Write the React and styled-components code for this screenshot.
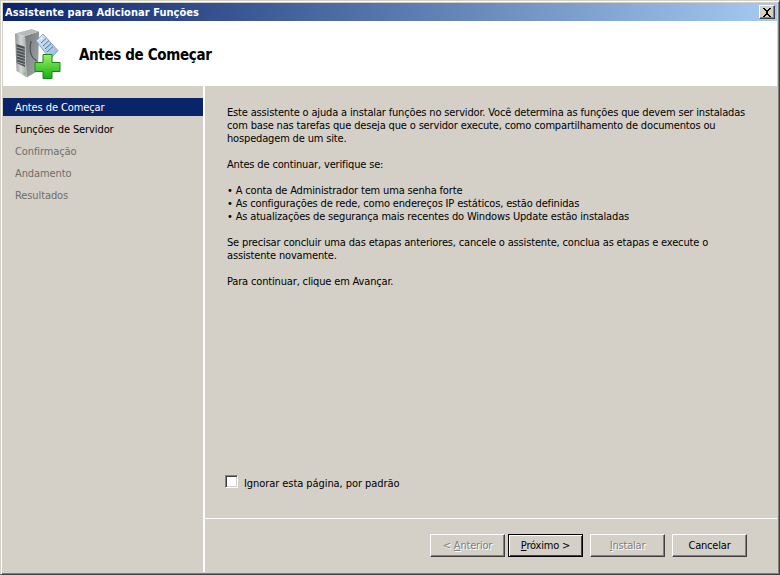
import styled, { createGlobalStyle } from "styled-components";

const GlobalStyle = createGlobalStyle`
  html, body {
    margin: 0;
    padding: 0;
    background: #d4d0c8;
  }
  * {
    box-sizing: border-box;
  }
`;

const steps = [
  { label: "Antes de Começar", state: "active" },
  { label: "Funções de Servidor", state: "normal" },
  { label: "Confirmação", state: "disabled" },
  { label: "Andamento", state: "disabled" },
  { label: "Resultados", state: "disabled" },
];

function ServerIcon() {
  return (
    <svg width="48" height="50" viewBox="0 0 48 50">
      <defs>
        <linearGradient id="front" x1="0" y1="0" x2="1" y2="0">
          <stop offset="0" stopColor="#8f9395" />
          <stop offset="0.5" stopColor="#d4d6d6" />
          <stop offset="1" stopColor="#a9acad" />
        </linearGradient>
        <linearGradient id="side" x1="0" y1="0" x2="1" y2="1">
          <stop offset="0" stopColor="#74797c" />
          <stop offset="1" stopColor="#a4a8aa" />
        </linearGradient>
        <linearGradient id="plus" x1="0" y1="0" x2="0" y2="1">
          <stop offset="0" stopColor="#a0ee68" />
          <stop offset="1" stopColor="#14b014" />
        </linearGradient>
        <linearGradient id="tag" x1="0" y1="0" x2="1" y2="1">
          <stop offset="0" stopColor="#dcebf9" />
          <stop offset="1" stopColor="#94b6da" />
        </linearGradient>
      </defs>
      <path d="M11 7 L25 2.5 L24 42 L12.5 48.5 Z" fill="url(#side)" />
      <path d="M1 4.5 L17.5 0 L25 2.5 L11 7 Z" fill="#b7babb" />
      <path d="M1 4.5 L11 7 L12.5 48.5 L2.5 42 Z" fill="url(#front)" />
      <path d="M2.5 15 L10.7 17.7 L10.9 38 L2.7 34 Z" fill="#4a5053" />
      <path d="M2.5 18 L10.7 20.5 M2.5 21 L10.8 23.5 M2.6 24 L10.8 26.5 M2.6 27 L10.8 29.5 M2.6 30 L10.9 32.5 M2.7 33 L10.9 35.5" stroke="#a8acae" strokeWidth="0.9" />
      <rect x="9.5" y="43.5" width="2" height="2" fill="#63d13c" />
      <path d="M17 12 C15 22 17 29 23 32" fill="none" stroke="#4e5457" strokeWidth="1.3" />
      <path d="M22 11.7 L29 5 L44 21.7 L36 30 Z" fill="url(#tag)" stroke="#6f93b8" strokeWidth="0.8" />
      <circle cx="27.5" cy="9.5" r="1" fill="#fff" />
      <path d="M27 14 L32 9.5 M29 17 L35 11.5 M31 20 L37 14.5 M33 23 L39 17.5" stroke="#55779c" strokeWidth="1" />
      <path
        d="M29 25.5 h9 v8 h8 v9 h-8 v7 h-9 v-7 h-8 v-9 h8 Z"
        fill="url(#plus)"
        stroke="#128a12"
        strokeWidth="1"
        strokeLinejoin="round"
      />
    </svg>
  );
}

export default function App() {
  return (
    <>
      <GlobalStyle />
      <Window>
        <TitleBar>
          <Title>Assistente para Adicionar Funções</Title>
          <CloseButton aria-label="Fechar">
            <svg width="10" height="9" viewBox="0 0 10 9">
              <path d="M1 0h2v1h1v1h2V1h1V0h2v1H8v1H7v1H6v3h1v1h1v1h1v1H7V8H6V7H4v1H3v1H1V8h1V7h1V6h1V3H3V2H2V1H1z" fill="#000" />
            </svg>
          </CloseButton>
        </TitleBar>
        <Banner>
          <IconSlot>
            <ServerIcon />
          </IconSlot>
          <Heading>Antes de Começar</Heading>
        </Banner>
        <Body>
          <Sidebar>
            {steps.map((step) => (
              <Step key={step.label} $state={step.state}>
                {step.label}
              </Step>
            ))}
          </Sidebar>
          <Main>
            <Content>
              <Paragraph>
                Este assistente o ajuda a instalar funções no servidor. Você determina as funções que devem ser instaladas
                <br />
                com base nas tarefas que deseja que o servidor execute, como compartilhamento de documentos ou
                <br />
                hospedagem de um site.
              </Paragraph>
              <Paragraph>Antes de continuar, verifique se:</Paragraph>
              <Paragraph>
                • A conta de Administrador tem uma senha forte
                <br />
                • As configurações de rede, como endereços IP estáticos, estão definidas
                <br />
                • As atualizações de segurança mais recentes do Windows Update estão instaladas
              </Paragraph>
              <Paragraph>
                Se precisar concluir uma das etapas anteriores, cancele o assistente, conclua as etapas e execute o
                <br />
                assistente novamente.
              </Paragraph>
              <Paragraph>Para continuar, clique em Avançar.</Paragraph>
              <SkipRow>
                <CheckBox />
                <SkipLabel>
                  I<Key>g</Key>norar esta página, por padrão
                </SkipLabel>
              </SkipRow>
            </Content>
            <Footer>
              <ButtonGroup>
                <Button disabled>
                  &lt; <Key>A</Key>nterior
                </Button>
                <Button $primary>
                  <Key>P</Key>róximo &gt;
                </Button>
              </ButtonGroup>
              <Button disabled>
                <Key>I</Key>nstalar
              </Button>
              <Button>Cancelar</Button>
            </Footer>
          </Main>
        </Body>
      </Window>
    </>
  );
}

const Window = styled.div`
  width: 780px;
  height: 575px;
  display: flex;
  flex-direction: column;
  padding: 2px;
  background: #d4d0c8;
  border: 1px solid;
  border-color: #d4d0c8 #404040 #404040 #d4d0c8;
  box-shadow: inset 1px 1px 0 #fff, inset -1px -1px 0 #808080;
  font-family: "DejaVu Sans Condensed", "DejaVu Sans", sans-serif;
  font-size: 11px;
  line-height: 13px;
  color: #000;
  overflow: hidden;
`;

const TitleBar = styled.div`
  height: 18px;
  flex: none;
  display: flex;
  align-items: center;
  justify-content: space-between;
  padding: 0 2px;
  background: linear-gradient(90deg, #0a246a, #a6caf0);
`;

const Title = styled.div`
  color: #fff;
  font-weight: 700;
  letter-spacing: 0.04px;
`;

const CloseButton = styled.button`
  width: 16px;
  height: 14px;
  padding: 0;
  display: flex;
  align-items: center;
  justify-content: center;
  background: #d4d0c8;
  border: 1px solid;
  border-color: #fff #404040 #404040 #fff;
  box-shadow: inset -1px -1px 0 #808080;
`;

const Banner = styled.div`
  height: 65px;
  flex: none;
  display: flex;
  align-items: center;
  background: #fff;
`;

const IconSlot = styled.div`
  width: 76px;
  padding-left: 11px;
  display: flex;
  flex: none;
`;

const Heading = styled.h1`
  margin: 3px 0 0;
  font-size: 15px;
  line-height: 18px;
  font-weight: 700;
  letter-spacing: -0.35px;
`;

const Body = styled.div`
  flex: 1;
  display: flex;
  min-height: 0;
`;

const Sidebar = styled.nav`
  width: 202px;
  flex: none;
  display: flex;
  flex-direction: column;
  gap: 4px;
  padding-top: 12px;
  border-right: 2px solid #fff;
`;

const Step = styled.div`
  height: 18px;
  display: flex;
  align-items: center;
  padding-left: 12px;
  letter-spacing: -0.1px;
  background: ${(p) => (p.$state === "active" ? "#0a246a" : "transparent")};
  color: ${(p) =>
    p.$state === "active" ? "#fff" : p.$state === "disabled" ? "#6f6d68" : "#000"};
`;

const Main = styled.main`
  flex: 1;
  display: flex;
  flex-direction: column;
  min-width: 0;
`;

const Content = styled.div`
  flex: 1;
  display: flex;
  flex-direction: column;
  gap: 13px;
  padding: 20px 0 0 22px;
  white-space: nowrap;
  letter-spacing: -0.16px;
`;

const Paragraph = styled.p`
  margin: 0;
`;

const SkipRow = styled.label`
  margin: auto 0 28px -2px;
  display: flex;
  align-items: flex-start;
  gap: 6px;
`;

const SkipLabel = styled.span`
  padding-top: 2px;
  letter-spacing: -0.07px;
`;

const CheckBox = styled.span`
  width: 13px;
  height: 13px;
  flex: none;
  background: #fff;
  border: 1px solid;
  border-color: #808080 #fff #fff #808080;
  box-shadow: inset 1px 1px 0 #404040, inset -1px -1px 0 #d4d0c8;
`;

const Key = styled.span`
  text-decoration: underline;
`;

const Footer = styled.div`
  height: 54px;
  flex: none;
  display: flex;
  align-items: flex-start;
  gap: 7px;
  padding: 15px 0 0 225px;
  border-top: 1px solid #fff;
`;

const ButtonGroup = styled.div`
  display: flex;
  gap: 3px;
`;

const Button = styled.button`
  width: 75px;
  height: 23px;
  padding: 0;
  font: inherit;
  letter-spacing: -0.2px;
  color: #000;
  background: #d4d0c8;
  border: 1px solid;
  border-color: #fff #404040 #404040 #fff;
  box-shadow: inset -1px -1px 0 #808080;
  ${(p) =>
    p.$primary &&
    `
    outline: 1px solid #000;
    outline-offset: -1px;
    border-color: #000;
    box-shadow: inset 1px 1px 0 #fff, inset -1px -1px 0 #404040;
  `}

  &:disabled {
    color: #808080;
    text-shadow: 1px 1px 0 #fff;
  }
`;
